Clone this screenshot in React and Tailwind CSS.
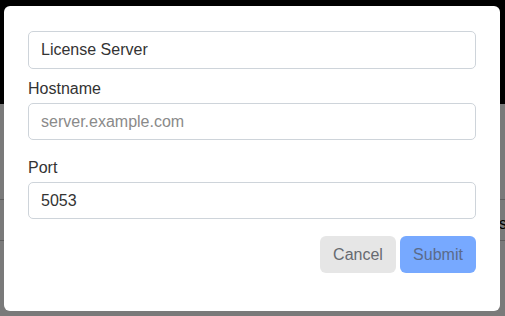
export default function App() {
  return (
    <div className="relative w-[505px] h-[316px] overflow-hidden font-['Liberation_Sans',Arial,sans-serif]">
      <div className="flex flex-col h-full">
        <div className="h-[104px] bg-black" />
        <div className="flex-1 bg-[#7a7a7a] relative">
          <div className="absolute left-0 right-0 top-[95px] h-px bg-[#5e5e5e]" />
          <div className="absolute left-0 right-0 top-[136px] h-px bg-[#5e5e5e]" />
          <div className="absolute right-[-2px] top-[112px] text-[16px] text-black leading-none">s</div>
        </div>
      </div>
      <div className="absolute left-[4px] top-[6px] w-[496px] h-[305px] bg-white rounded-[6px] px-6 pt-[25px] text-[16px] text-[#333]">
        <input
          className="block w-full h-[38px] border border-[#ced4da] rounded-[5px] px-3 text-[16px] text-[#333] outline-none mb-2"
          defaultValue="License Server"
        />
        <label className="block leading-6 mb-[2px]">Hostname</label>
        <input
          className="block w-full h-[37px] border border-[#ced4da] rounded-[5px] px-3 text-[16px] text-[#333] placeholder:text-[#8a8a8a] outline-none mb-4"
          placeholder="server.example.com"
        />
        <label className="block leading-6 mb-[2px]">Port</label>
        <input
          className="block w-full h-[37px] border border-[#ced4da] rounded-[5px] px-3 text-[16px] text-[#333] outline-none"
          defaultValue="5053"
        />
        <div className="flex justify-end gap-1 mt-[17px]">
          <button className="w-[76px] h-[37px] rounded-[6px] bg-[#e6e6e6] text-[#666a70] text-[16px]">Cancel</button>
          <button className="w-[76px] h-[37px] rounded-[6px] bg-[#77a9ff] text-[#5b6b8a] text-[16px]">Submit</button>
        </div>
      </div>
    </div>
  );
}
